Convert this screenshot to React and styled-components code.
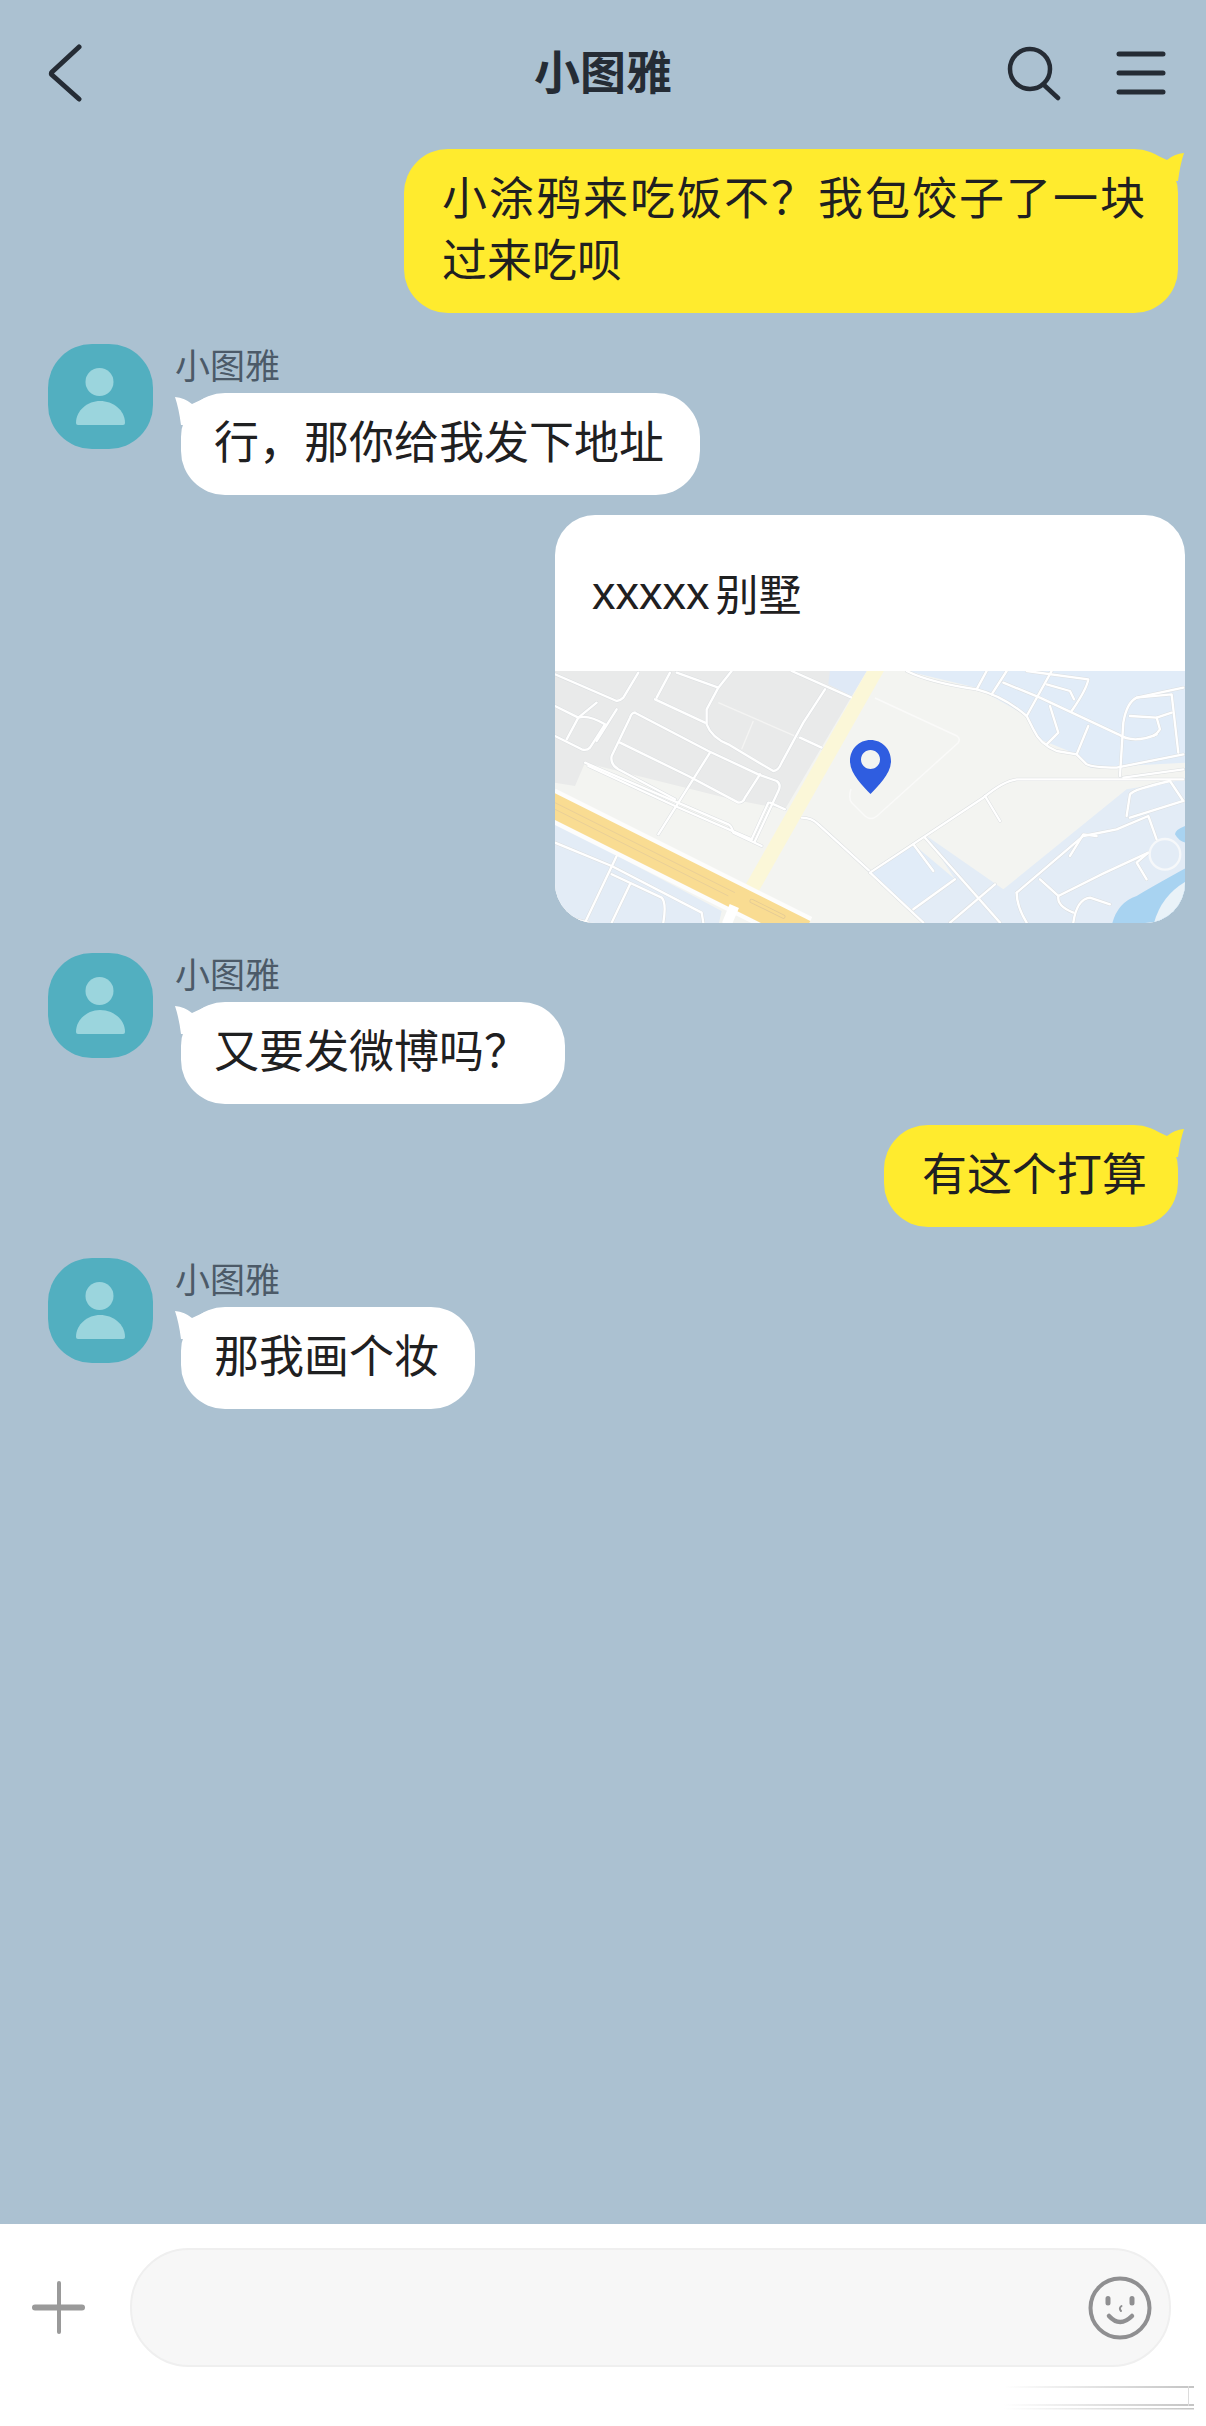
import React from 'react';
import styled, { createGlobalStyle } from 'styled-components';

const Global = createGlobalStyle`
    html, body {
        margin: 0;
        padding: 0;
        background: #abc1d1;
    }
    * {
        box-sizing: border-box;
    }
`;

const Page = styled.div`
    width: 1206px;
    height: 2426px;
    display: flex;
    flex-direction: column;
    background: #abc1d1;
    overflow: hidden;
    font-family: "Liberation Sans", "Noto Sans CJK SC", sans-serif;
    color: #1f2021;
`;

const Header = styled.header`
    height: 149px;
    flex: none;
    display: grid;
    grid-template-columns: 1fr auto 1fr;
    align-items: center;
    padding: 0 40px 3px 40px;
    color: #252c35;
`;

const BackSlot = styled.div`
    padding-left: 8px;
`;

const Title = styled.h1`
    margin: 0;
    font-size: 46px;
    line-height: 60px;
    font-weight: 700;
`;

const HeaderActions = styled.div`
    display: flex;
    justify-content: flex-end;
    align-items: center;
    gap: 54px;
`;

const Chat = styled.main`
    flex: 1;
    display: flex;
    flex-direction: column;
`;

const Outgoing = styled.div`
    display: flex;
    justify-content: flex-end;
    margin-top: ${(p) => p.$top || 0}px;
    padding-right: ${(p) => p.$inset || 28}px;
`;

const Incoming = styled.div`
    display: flex;
    gap: 22px;
    margin-top: ${(p) => p.$top || 0}px;
    padding-left: 48px;
`;

const AvatarBox = styled.div`
    width: 105px;
    height: 105px;
    flex: none;
    border-radius: 44px;
    background: #52afc0;
`;

const Sender = styled.div`
    height: 49px;
    font-size: 35px;
    line-height: 46px;
    color: #4c5a68;
`;

const Bubble = styled.div`
    position: relative;
    padding: ${(p) => (p.$mine ? '20px 31px 20px 38px' : '20px 36px 20px 33px')};
    font-size: 45px;
    line-height: 62px;
    white-space: nowrap;
    border-radius: 44px;
    background: ${(p) => (p.$mine ? '#ffeb2e' : '#ffffff')};
    margin-left: ${(p) => (p.$mine ? 0 : 6)}px;

    &::after {
        content: '';
        position: absolute;
        top: 2px;
        width: 30px;
        height: 30px;
        background: inherit;
        ${(p) => p.$mine
            ? `right: -6px; clip-path: path('M30 2 Q20 3 13 9 L0 3 L0 30 L24 30 Q26 14 30 2Z');`
            : `left: -6px; clip-path: path('M0 2 Q10 3 17 9 L30 3 L30 30 L6 30 Q4 14 0 2Z');`}
    }
`;

const Tracked = styled.span`
    letter-spacing: 2px;
`;

const LocationCard = styled.div`
    width: 630px;
    border-radius: 40px;
    overflow: hidden;
    background: #ffffff;
`;

const LocationName = styled.div`
    height: 156px;
    display: flex;
    align-items: center;
    padding: 0 0 2px 37px;
    font-size: 47px;
`;

const PlaceSuffix = styled.span`
    margin-left: 6px;
    font-size: 43px;
`;

const MapSvg = styled.svg`
    display: block;
    width: 630px;
    height: 252px;
`;

const Footer = styled.footer`
    position: relative;
    height: 202px;
    flex: none;
    display: flex;
    align-items: flex-start;
    gap: 45px;
    padding: 24px 35px 0 32px;
    background: #ffffff;
`;

const PlusButton = styled.div`
    flex: none;
    width: 53px;
    height: 119px;
    display: flex;
    align-items: center;
`;

const InputPill = styled.div`
    flex: 1;
    height: 119px;
    display: flex;
    justify-content: flex-end;
    align-items: center;
    padding-right: 16px;
    border-radius: 59px;
    border: 2px solid #efefef;
    background: #f7f7f7;
`;

const Watermark = styled.svg`
    position: absolute;
    right: 12px;
    bottom: 12px;
`;

const Icon = styled.svg`
    display: block;
    fill: none;
    stroke: currentColor;
    stroke-linecap: round;
    stroke-linejoin: round;
`;

const BackIcon = () => (
    <Icon width="36" height="58" viewBox="0 0 36 58" strokeWidth="5">
        <path d="M31 3 L4 28 Q3 29 3.5 30.5 L31 55" />
    </Icon>
);

const SearchIcon = () => (
    <Icon width="56" height="56" viewBox="0 0 56 56" strokeWidth="4.5">
        <circle cx="24" cy="24" r="20" />
        <path d="M38 40 L52 53" />
    </Icon>
);

const MenuIcon = () => (
    <Icon width="50" height="46" viewBox="0 0 50 46" strokeWidth="5">
        <path d="M3 4 H47 M3 23 H47 M3 42 H47" />
    </Icon>
);

const PlusIcon = () => (
    <svg width="53" height="53" viewBox="0 0 53 53" fill="#9a9a9a">
        <rect x="0" y="23.5" width="53" height="6" rx="3" />
        <rect x="25" y="0" width="4" height="53" rx="2" />
    </svg>
);

const SmileIcon = () => (
    <svg width="66" height="66" viewBox="0 0 66 66" fill="none" stroke="#8f8f91" strokeLinecap="round">
        <circle cx="33" cy="33" r="29.5" strokeWidth="4" />
        <path d="M21 23.5 V28 M45 23.5 V28" strokeWidth="5" />
        <path d="M34.5 31 Q31.5 33 34 36" strokeWidth="2" />
        <path d="M22 41 Q33 53 45 41" strokeWidth="4.5" />
    </svg>
);

const Avatar = () => (
    <AvatarBox>
        <svg width="105" height="105" viewBox="0 0 105 105" fill="#9bd5dd">
            <circle cx="51.5" cy="38" r="14" />
            <path d="M28 79 C28 66 40 57 52 57 C65 57 77 66 77 79 Q77 81 75 81 L30 81 Q28 81 28 79Z" />
        </svg>
    </AvatarBox>
);

// streets traced from the map tile, left and right half each in their own coords
const leftRoads = [
    'M0 25 L185 105 Q195 105 205 95 L250 20',
    'M345 20 L305 95',
    'M365 20 L490 65 L530 15',
    'M490 65 L455 130 L455 175 Q470 215 520 235 L620 295 L655 315 Q670 315 680 290 L745 170 L810 70',
    'M710 15 L890 95',
    'M735 215 L800 245',
    'M300 100 L450 170',
    'M0 120 L70 155 Q100 145 150 175 L105 245 Q95 255 80 250 L0 210',
    'M125 110 L70 155 L35 220',
    'M185 130 L125 225',
    'M240 140 L460 255 L610 325 L665 345 Q680 355 670 375 L600 525',
    'M240 140 Q230 140 225 155 L170 270 Q165 295 190 310 L360 400',
    'M195 230 L400 330 L550 410 Q565 410 570 395 L615 325',
    'M465 260 L310 505',
    'M90 290 L520 475 Q530 480 535 500 L620 540',
    'M100 300 L360 420 L590 520',
    'M645 410 L690 430',
    'M640 410 L590 520',
    'M740 455 Q770 455 790 475 L960 630',
    'M0 530 L170 600 L440 740 L445 770',
    'M185 570 L90 770',
    'M170 625 L320 695 Q335 710 325 770',
    'M225 655 L170 770',
    'M0 745 L100 770',
];

const rightRoads = [
    'M110 15 Q180 50 320 70 Q400 90 470 150 L490 190 Q510 235 560 255 L620 265 L650 295 Q670 305 740 305 L940 265',
    'M350 15 L320 70',
    'M410 15 L365 85',
    'M400 50 L510 95 L745 205 Q790 235 860 205',
    'M545 15 L470 150',
    'M470 15 L655 40 Q650 70 605 135',
    'M530 55 L600 75 L612 100',
    'M655 180 L620 265',
    'M750 330 L760 170 Q770 110 800 95 L905 85 L925 260',
    'M780 150 L860 155 L905 140',
    'M860 155 L870 190 Q865 200 850 210',
    'M540 120 L565 200 L530 235',
    'M940 65 L800 95',
    'M0 620 L340 395 Q400 345 440 340 L940 340',
    'M760 335 L940 310',
    'M345 390 L390 465',
    'M0 620 L160 770',
    'M130 535 L190 615',
    'M165 515 L390 770',
    'M130 730 L255 640',
    'M240 770 L375 655',
    'M770 450 L780 385 Q790 370 900 345 L940 405',
    'M780 455 L940 405',
    'M440 680 L640 510 L740 490 L835 450 L860 520',
    'M440 680 Q440 720 470 770',
    'M510 640 L565 690 Q700 620 835 560',
    'M835 560 L800 590 L830 640',
    'M565 690 Q560 720 610 740',
    'M610 770 Q620 700 660 695 L720 715',
    'M600 570 L640 505 L680 510',
];

const RoadLines = ({ paths }) => (
    <g fill="none" strokeLinecap="round" strokeLinejoin="round">
        <g stroke="#dcdfe1" strokeWidth="10">
            {paths.map((d, i) => <path key={i} d={d} />)}
        </g>
        <g stroke="#ffffff" strokeWidth="7">
            {paths.map((d, i) => <path key={i} d={d} />)}
        </g>
    </g>
);

const MapArt = () => (
    <MapSvg viewBox="0 0 630 252">
        <rect width="630" height="252" fill="#f3f4f1" />

        <g transform="translate(0 -5) scale(.3333)">
            <path d="M0 15 H935 L690 430 L530 400 L90 290 L60 360 L0 350Z" fill="#e9eaea" />
            <path d="M825 15 H935 L890 90 L820 55Z" fill="#dfe9f6" />
            <path d="M0 470 L500 735 L490 780 H0Z" fill="#e3ecf6" />
            <path d="M490 110 L800 245 M595 165 L560 250" fill="none" stroke="#f4f4f3" strokeWidth="4" />
            <RoadLines paths={leftRoads} />
            <path d="M970 0 L592 665" stroke="#fbf7d8" strokeWidth="44" fill="none" />
            <path d="M-20 412 L750 797" stroke="#fdfdfc" strokeWidth="98" fill="none" />
            <path d="M-20 412 L750 797" stroke="#f9dc92" strokeWidth="72" fill="none" />
            <path d="M0 410 L540 680 M0 430 L520 690" stroke="#e9cf98" strokeWidth="3" fill="none" />
            <path d="M590 705 L685 752" stroke="#e4cb96" strokeWidth="13" fill="none" strokeLinecap="round" />
            <path d="M590 705 L685 752" stroke="#f9dc92" strokeWidth="8" fill="none" strokeLinecap="round" />
            <path d="M538 720 L515 775" stroke="#ffffff" strokeWidth="30" fill="none" />
        </g>

        <g transform="translate(315 -5) scale(.3333)">
            <path d="M110 15 L320 65 L470 150 L510 220 L620 265 L660 305 L950 290 V15Z" fill="#e1ecf8" />
            <path d="M0 620 L130 535 L255 640 L125 730Z" fill="#e1ecf8" />
            <path d="M170 510 L400 670 L770 370 L950 340 V780 H170 L125 730 L255 640Z" fill="#e3ecf6" />
            <path d="M725 780 Q740 710 800 690 Q850 660 950 605 V780Z" fill="#a8d3f1" />
            <path d="M850 780 Q870 690 950 645 V780Z" fill="#e9f2f8" />
            <path d="M950 478 Q915 490 915 505 Q930 530 950 530Z" fill="#a8d3f1" />
            <RoadLines paths={rightRoads} />
            <circle cx="885" cy="565" r="46" fill="#e3ecf6" stroke="#f6f8fa" strokeWidth="7" />
        </g>

        <path d="M320 27 L402 65 Q406 68 403 72 L322 145 Q316 150 310 145 L297 132 Q293 128 296 118" fill="none" stroke="#fafaf9" strokeWidth="1.5" />

        <path
            fillRule="evenodd"
            fill="#2f5de0"
            d="M315.5 69 C304 69 295 78 295 90 C295 103 308 115 315.5 123 C323 115 336 103 336 90 C336 78 327 69 315.5 69Z M315.5 79 C320.5 79 325 83 325 88.5 C325 94 320.5 98 315.5 98 C310.5 98 306 94 306 88.5 C306 83 310.5 79 315.5 79Z"
        />
    </MapSvg>
);

const Watermarks = () => (
    <Watermark width="190" height="34" viewBox="0 0 190 34" fill="none">
        <defs>
            <linearGradient id="fade" x1="0" x2="1" y1="0" y2="0">
                <stop offset="0" stopColor="#ffffff" />
                <stop offset="1" stopColor="#c4c4c4" />
            </linearGradient>
        </defs>
        <rect x="0" y="6" width="190" height="2" fill="url(#fade)" />
        <rect x="0" y="24" width="190" height="2" fill="url(#fade)" />
        <rect x="0" y="28" width="190" height="1.5" fill="url(#fade)" />
        <rect x="184" y="6" width="1" height="20" fill="#dcdcdc" />
    </Watermark>
);

const App = () => {
    return (
        <Page>
            <Global />
            <Header>
                <BackSlot>
                    <BackIcon />
                </BackSlot>
                <Title>小图雅</Title>
                <HeaderActions>
                    <SearchIcon />
                    <MenuIcon />
                </HeaderActions>
            </Header>

            <Chat>
                <Outgoing>
                    <Bubble $mine>
                        <Tracked>{'小涂鸦来吃饭不\uFF1F我包饺子了一块'}</Tracked>
                        <br />
                        过来吃呗
                    </Bubble>
                </Outgoing>

                <Incoming $top={31}>
                    <Avatar />
                    <div>
                        <Sender>小图雅</Sender>
                        <Bubble>{'行\uFF0C那你给我发下地址'}</Bubble>
                    </div>
                </Incoming>

                <Outgoing $top={20} $inset={21}>
                    <LocationCard>
                        <LocationName>
                            xxxxx<PlaceSuffix>别墅</PlaceSuffix>
                        </LocationName>
                        <MapArt />
                    </LocationCard>
                </Outgoing>

                <Incoming $top={30}>
                    <Avatar />
                    <div>
                        <Sender>小图雅</Sender>
                        <Bubble>{'又要发微博吗\uFF1F'}</Bubble>
                    </div>
                </Incoming>

                <Outgoing $top={21}>
                    <Bubble $mine>有这个打算</Bubble>
                </Outgoing>

                <Incoming $top={31}>
                    <Avatar />
                    <div>
                        <Sender>小图雅</Sender>
                        <Bubble>那我画个妆</Bubble>
                    </div>
                </Incoming>
            </Chat>

            <Footer>
                <PlusButton>
                    <PlusIcon />
                </PlusButton>
                <InputPill>
                    <SmileIcon />
                </InputPill>
                <Watermarks />
            </Footer>
        </Page>
    );
};

export default App;
